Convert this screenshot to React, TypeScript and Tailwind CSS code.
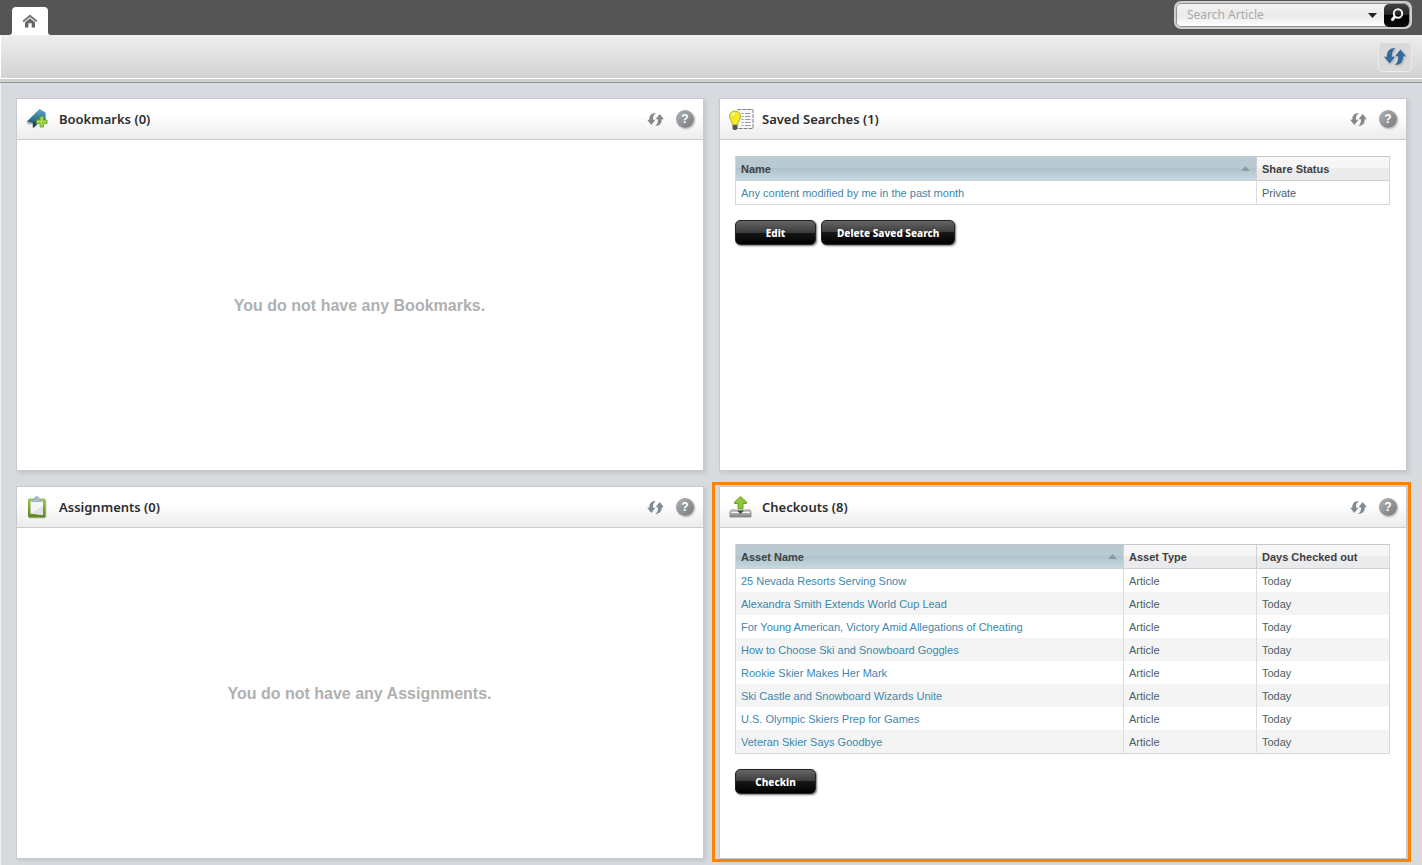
import type { ReactNode } from "react";

const articles = [
  "25 Nevada Resorts Serving Snow",
  "Alexandra Smith Extends World Cup Lead",
  "For Young American, Victory Amid Allegations of Cheating",
  "How to Choose Ski and Snowboard Goggles",
  "Rookie Skier Makes Her Mark",
  "Ski Castle and Snowboard Wizards Unite",
  "U.S. Olympic Skiers Prep for Games",
  "Veteran Skier Says Goodbye",
];

function RefreshIcon({ className }: { className: string }) {
  const arrow = "M9.400 0C4.500 0 2.300 2.600 2.300 7.200H0l4.500 5.600L9 7.200H6.400C6 4 7.200 1.600 9.400 0Z";
  return (
    <svg viewBox="0 0 18 14" className={className} fill="currentColor" aria-hidden="true">
      <path d={arrow} />
      <path d={arrow} transform="rotate(180 9 7)" />
    </svg>
  );
}

function HomeIcon() {
  return (
    <svg viewBox="0 0 16 14" className="h-3.5 w-4" aria-hidden="true">
      <path d="M1.200 7.600 8 1.700l6.800 5.900" fill="none" stroke="#757575" strokeWidth="2" />
      <path d="M3 8.400 8 4.200l5 4.200V13.500H9.700V9.200H6.400v4.300H3Z" fill="#666" />
    </svg>
  );
}

function BookmarkIcon() {
  return (
    <svg viewBox="0 0 24 24" className="size-6" aria-hidden="true">
      <defs>
        <linearGradient id="bm" x1="0" y1="0" x2="0" y2="1">
          <stop offset="0" stopColor="#5aa9c9" />
          <stop offset=".55" stopColor="#34708c" />
          <stop offset="1" stopColor="#14252e" />
        </linearGradient>
      </defs>
      <path d="M8 22V17.500H1.500L.8 15.500 13.500 3l6 3.500V15L12 17Z" fill="#8d9499" opacity=".6" />
      <path d="M13.500 2 .8 14.500 6.800 16v5L12 16.500l7.500-2V5.500Z" fill="url(#bm)" />
      <path d="M14 9.500h3.500V13H21v3.500h-3.500V20H14v-3.500h-3.500V13H14Z" fill="#a2d840" stroke="#6d9f38" strokeWidth=".9" />
    </svg>
  );
}

function SearchesIcon() {
  return (
    <svg viewBox="0.500 0 25 24" className="h-6 w-[25px]" aria-hidden="true">
      <path d="M9 2.500H24.500V21.500H8" fill="#f7f7f7" stroke="#808080" strokeWidth="1" strokeDasharray="4 1" />
      <path d="M13 6.500h2M13 9.500h2M13 12.500h2M13 15.500h2M13 18.500h2M16.500 6.500H22M16.500 9.500H22M16.500 12.500H22M16.500 15.500H22M16.500 18.500H22" stroke="#999" strokeWidth="1" />
      <path d="M6.500 4C3 4 1 6.300 1 9.500c0 3.600 2.600 4.700 3 8.500h5c.4-3.800 3-4.900 3-8.500C12 6.300 10 4 6.500 4Z" fill="#f3e928" stroke="#a69e28" strokeWidth=".8" />
      <path d="M3 8.500C3.300 6.400 4.600 5.300 6.500 5.300c-.4 2.400-1.500 3.400-3.500 3.200Z" fill="#fffcc4" />
      <path d="M4 18h5v3.300L7.800 23H5.200L4 21.300Z" fill="#555" />
    </svg>
  );
}

function ClipboardIcon() {
  return (
    <svg viewBox="0 0 24 24" className="size-6" aria-hidden="true">
      <defs>
        <linearGradient id="cb" x1="0" y1="0" x2="0" y2="1">
          <stop offset="0" stopColor="#9cc746" />
          <stop offset="1" stopColor="#5d8420" />
        </linearGradient>
      </defs>
      <rect x="2.500" y="4" width="18" height="19.500" rx="2" fill="#a5a8a5" opacity=".55" />
      <rect x="2" y="3.500" width="17.500" height="19" rx="1.500" fill="url(#cb)" />
      <path d="M4.500 5.500H17v14.500L4.500 18.500Z" fill="#f3f5f6" />
      <path d="M17 11v9L4.500 18.500Z" fill="#dfe3e5" />
      <path d="M5.500 6.500V4.800l3-.8C8.800 2.300 9.500 1.500 10.800 1.500s2 .8 2.300 2.500l3 .8v1.700Z" fill="#a9bccb" stroke="#8ba0af" strokeWidth=".6" />
    </svg>
  );
}

function CheckoutIcon() {
  return (
    <svg viewBox="0 0 24 24" className="size-6" aria-hidden="true">
      <defs>
        <linearGradient id="tray" x1="0" y1="0" x2="0" y2="1">
          <stop offset="0" stopColor="#d7d7d7" />
          <stop offset="1" stopColor="#808080" />
        </linearGradient>
      </defs>
      <path d="M2 15h19l1 2v5H1v-5Z" fill="url(#tray)" stroke="#858585" strokeWidth=".8" />
      <path d="M2 17.500h19" stroke="#f4f4f4" />
      <path d="M8 15.500h7l-3.500 3.500Z" fill="#484848" />
      <path d="M11.500 1.500 17.500 7V8.500H14v5H9v-5H5.500V7Z" fill="#8bc832" stroke="#5c9422" strokeWidth=".9" />
    </svg>
  );
}

function Panel({
  title,
  icon,
  highlighted = false,
  children,
}: {
  title: string;
  icon: ReactNode;
  highlighted?: boolean;
  children: ReactNode;
}) {
  return (
    <section className="relative flex min-w-0 flex-col border border-[#c6c8ce] bg-white shadow-[2px_2px_4px_#c3c6cb]">
      <header className="flex h-[41px] items-center border-b border-[#c9cbd0] bg-linear-to-b from-white from-40% to-[#ececed] px-[9px]">
        <span className="-ml-px flex w-[34px] items-center justify-center pr-2">{icon}</span>
        <h2 className="flex-1 font-['Noto_Sans','Open_Sans',sans-serif] text-[13px] leading-5 font-semibold text-[#2d2d2d]">
          {title}
        </h2>
        <button type="button" aria-label={`Refresh ${title}`} className="mr-3 text-[#828a8f]">
          <RefreshIcon className="h-[13px] w-[17px]" />
        </button>
        <button
          type="button"
          aria-label={`Help for ${title}`}
          className="flex size-[18px] items-center justify-center rounded-full bg-linear-to-br from-[#b0b2b4] to-[#777a7d] text-[12px] leading-none font-bold text-white shadow-[1px_1px_2px_#aaa]"
        >
          ?
        </button>
      </header>
      <div className="flex flex-1 flex-col pt-4 pr-4 pb-3.5 pl-[15px]">{children}</div>
      {highlighted && (
        <div className="pointer-events-none absolute -top-[5px] -right-[5px] -bottom-1 -left-2 border-3 border-[#ff8200]" />
      )}
    </section>
  );
}

function Empty({ children }: { children: ReactNode }) {
  return (
    <p className="flex flex-1 items-center justify-center text-center text-[16px] leading-5 font-bold text-[#b0b0b0]">
      {children}
    </p>
  );
}

function SortHead({ children }: { children: ReactNode }) {
  return (
    <th className="border-b border-[#ccd3d7] bg-[linear-gradient(#b9cad2_0%,#b9cad2_50%,#afc3cc_50%,#c6d8e0_100%)] pr-1.5 pl-[5px] text-left">
      <span className="flex items-center justify-between">
        {children}
        <svg viewBox="0 0 9 5" className="h-[5px] w-[9px]" aria-hidden="true">
          <path d="M0 5 4.500 0 9 5Z" fill="#8c9ba3" />
        </svg>
      </span>
    </th>
  );
}

function Head({ children }: { children: ReactNode }) {
  return (
    <th className="border-b border-l border-[#d0d0d2] bg-[linear-gradient(#f8f8f8_0%,#f5f5f6_50%,#ececed_50%,#e9eaec_100%)] px-[5px] text-left">
      {children}
    </th>
  );
}

const tableClass =
  "w-full table-fixed border-separate border-spacing-0 border border-[#d5d6d8] border-t-[#c6c8ca] text-[11px] leading-4 text-[#4a5f66]";

function Cell({ children }: { children: ReactNode }) {
  return <td className="border-l border-[#dcdcde] px-[5px]">{children}</td>;
}

function BlackButton({ children }: { children: ReactNode }) {
  return (
    <button
      type="button"
      className="h-[25px] min-w-[81px] rounded-[5px] border border-[#222] bg-[linear-gradient(#656565_0%,#3c3c3c_50%,#171717_50%,#000_100%)] px-[15px] font-['Noto_Sans','Open_Sans',sans-serif] text-[10px] leading-4 font-extrabold text-white shadow-[1px_1px_2px_#777]"
    >
      {children}
    </button>
  );
}

export default function App() {
  return (
    <div className="flex min-h-screen flex-col bg-[#d7dade] font-['Liberation_Sans',Arial,sans-serif]">
      <div className="flex h-[35px] items-end justify-between bg-[#555] pr-2.5 pl-[9px]">
        <nav className="flex items-end">
          <svg viewBox="0 0 3 3" className="size-[3px]" aria-hidden="true">
            <path d="M3 0v3H0Q3 3 3 0Z" fill="#fff" />
          </svg>
          <a href="#home" aria-label="Home" className="flex h-7 w-9 items-center justify-center rounded-t-[4px] bg-white">
            <HomeIcon />
          </a>
          <svg viewBox="0 0 3 3" className="size-[3px]" aria-hidden="true">
            <path d="M0 0v3h3Q0 3 0 0Z" fill="#fff" />
          </svg>
        </nav>
        <form
          onSubmit={(e) => e.preventDefault()}
          className="mb-1.5 flex h-7 w-[238px] items-center rounded-[7px] border-2 border-[#cfcdcd] bg-linear-to-b from-[#f3f3f3] via-[#ebebeb] to-white pr-px inset-ring inset-ring-[#929292]"
        >
          <input
            type="text"
            aria-label="Search Article"
            placeholder="Search Article"
            className="min-w-0 flex-1 bg-transparent pl-[11px] font-['Noto_Sans','Open_Sans',sans-serif] text-[12px] leading-5 outline-none placeholder:text-[#aaa]"
          />
          <button type="button" aria-label="Search options" className="mr-[7px]">
            <svg viewBox="0 0 9 5" className="h-[5px] w-[9px]" aria-hidden="true">
              <path d="M0 0h9L4.500 5Z" fill="#222" />
            </svg>
          </button>
          <button
            type="submit"
            aria-label="Search"
            className="flex h-[23px] w-[25px] items-center justify-center rounded-[5px] bg-[linear-gradient(#444_0%,#222_50%,#000_50%,#0c0c0c_100%)]"
          >
            <svg viewBox="0 0 14 14" className="size-3.5" fill="none" stroke="#f4f4f4" aria-hidden="true">
              <circle cx="8" cy="5.500" r="4.200" strokeWidth="2" />
              <path d="M4.800 8.800 2.500 11.500" strokeWidth="3" strokeLinecap="round" />
            </svg>
          </button>
        </form>
      </div>

      <div className="flex h-[43px] items-center justify-end border-l border-white bg-linear-to-b from-[#eee] to-[#d2d2d2] pr-2.5">
        <button
          type="button"
          aria-label="Refresh all"
          className="flex h-[30px] w-[34px] items-center justify-center rounded-[4px] border border-[#ececec] bg-[#dadada] text-[#34699e]"
        >
          <RefreshIcon className="h-[17px] w-[22px] drop-shadow-[1px_1px_1px_#aaa]" />
        </button>
      </div>
      <div className="h-[5px] border-t border-b border-t-white border-b-[#959595] bg-[#d0d0d0]" />

      <main className="grid flex-1 grid-cols-2 grid-rows-2 gap-[15px] border-l border-[#eceef0] pt-[15px] pr-[15px] pb-1.5 pl-[15px]">
        <Panel title="Bookmarks (0)" icon={<BookmarkIcon />}>
          <Empty>You do not have any Bookmarks.</Empty>
        </Panel>

        <Panel title="Saved Searches (1)" icon={<SearchesIcon />}>
          <table className={tableClass}>
            <colgroup>
              <col />
              <col className="w-[133px]" />
            </colgroup>
            <thead className="text-[#3f3f3f]">
              <tr className="h-6">
                <SortHead>Name</SortHead>
                <Head>Share Status</Head>
              </tr>
            </thead>
            <tbody>
              <tr className="h-[23px]">
                <td className="px-[5px]">
                  <a href="#saved-search" className="text-[#3c87ad]">
                    Any content modified by me in the past month
                  </a>
                </td>
                <Cell>Private</Cell>
              </tr>
            </tbody>
          </table>
          <div className="mt-[15px] flex gap-[5px]">
            <BlackButton>Edit</BlackButton>
            <BlackButton>Delete Saved Search</BlackButton>
          </div>
        </Panel>

        <Panel title="Assignments (0)" icon={<ClipboardIcon />}>
          <Empty>You do not have any Assignments.</Empty>
        </Panel>

        <Panel title="Checkouts (8)" icon={<CheckoutIcon />} highlighted>
          <table className={tableClass}>
            <colgroup>
              <col />
              <col className="w-[133px]" />
              <col className="w-[133px]" />
            </colgroup>
            <thead className="text-[#3f3f3f]">
              <tr className="h-6">
                <SortHead>Asset Name</SortHead>
                <Head>Asset Type</Head>
                <Head>Days Checked out</Head>
              </tr>
            </thead>
            <tbody>
              {articles.map((name) => (
                <tr key={name} className="h-[23px] even:bg-[#f4f4f4]">
                  <td className="px-[5px]">
                    <a href="#article" className="text-[#3c87ad]">
                      {name}
                    </a>
                  </td>
                  <Cell>Article</Cell>
                  <Cell>Today</Cell>
                </tr>
              ))}
            </tbody>
          </table>
          <div className="mt-[15px] flex">
            <BlackButton>Checkin</BlackButton>
          </div>
        </Panel>
      </main>
    </div>
  );
}
